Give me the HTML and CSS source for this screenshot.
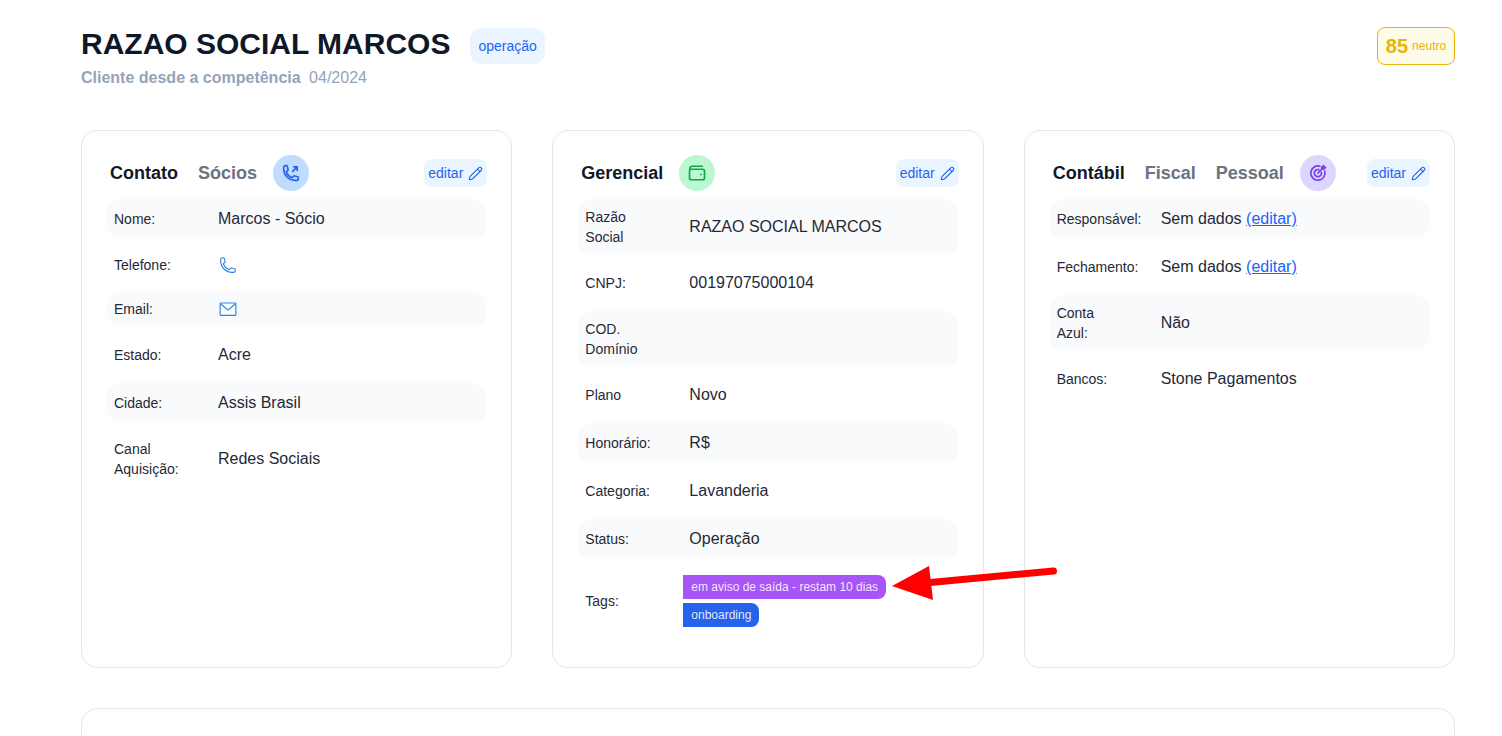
FILE: index.html
```html
<!DOCTYPE html>
<html lang="pt-BR">
<head>
    <meta charset="UTF-8">
    <meta name="viewport" content="width=device-width, initial-scale=1.0">
    <title>RAZAO SOCIAL MARCOS</title>
    <link rel="stylesheet" href="styles.css">
</head>
<body>
    <div class="page">
        <header class="client-header">
            <div>
                <div class="client-title">
                    <h1>RAZAO SOCIAL MARCOS</h1>
                    <span class="status-pill">operação</span>
                </div>
                <p class="client-since"><strong>Cliente desde a competência</strong> <span>04/2024</span></p>
            </div>
            <div class="score"><b>85</b> <span>neutro</span></div>
        </header>

        <section class="cards">
            <div class="card">
                <div class="card-head">
                    <span class="tab active">Contato</span>
                    <span class="tab">Sócios</span>
                    <span class="circle circle-blue">
                        <svg class="circle-icon" viewBox="0 0 24 24"><path d="M20.250 3.750v4.500m0-4.500h-4.500m4.500 0-6 6m3 12c-8.284 0-15-6.716-15-15V4.500A2.250 2.250 0 0 1 4.500 2.250h1.372c.516 0 .966.351 1.091.852l1.106 4.423c.11.44-.054.902-.417 1.173l-1.293.97a1.062 1.062 0 0 0-.38 1.21 12.035 12.035 0 0 0 7.143 7.143c.441.162.928-.004 1.21-.38l.97-1.293a1.125 1.125 0 0 1 1.173-.417l4.423 1.106c.5.125.852.575.852 1.091V19.500a2.250 2.250 0 0 1-2.250 2.250h-2.250Z"/></svg>
                    </span>
                    <button class="edit-button">editar
                        <svg class="pencil" viewBox="0 0 24 24"><path d="M21.174 6.812a1 1 0 0 0-3.986-3.987L3.842 16.174a2 2 0 0 0-.5.83l-1.321 4.352a.5.5 0 0 0 .623.622l4.353-1.32a2 2 0 0 0 .83-.497z"/><path d="m15 5 4 4"/></svg>
                    </button>
                </div>
                <div class="rows">
                    <div class="row"><span class="label">Nome:</span><span class="value">Marcos - Sócio</span></div>
                    <div class="row row-icon"><span class="label">Telefone:</span>
                        <svg class="contact-icon" viewBox="0 0 24 24"><path d="M2.250 6.750c0 8.284 6.716 15 15 15h2.250a2.250 2.250 0 0 0 2.250-2.250v-1.372c0-.516-.351-.966-.852-1.091l-4.423-1.106c-.44-.11-.902.055-1.173.417l-.97 1.293c-.282.376-.769.542-1.21.38a12.035 12.035 0 0 1-7.143-7.143c-.162-.441.004-.928.38-1.21l1.293-.97c.363-.271.527-.734.417-1.173L6.963 3.102a1.125 1.125 0 0 0-1.091-.852H4.500A2.250 2.250 0 0 0 2.250 4.500v2.250Z"/></svg>
                    </div>
                    <div class="row row-icon"><span class="label">Email:</span>
                        <svg class="contact-icon" viewBox="0 0 24 24"><rect x="1.500" y="4" width="21" height="16.500" rx="1"/><path d="m2 5 10 8.500L22 5"/></svg>
                    </div>
                    <div class="row"><span class="label">Estado:</span><span class="value">Acre</span></div>
                    <div class="row"><span class="label">Cidade:</span><span class="value">Assis Brasil</span></div>
                    <div class="row"><span class="label">Canal<br>Aquisição:</span><span class="value">Redes Sociais</span></div>
                </div>
            </div>

            <div class="card">
                <div class="card-head">
                    <span class="tab active">Gerencial</span>
                    <span class="circle circle-green">
                        <svg class="circle-icon" viewBox="0 0 24 24"><path d="M19 3H5.500A3 3 0 0 0 2.500 6"/><rect x="2" y="7" width="20" height="14" rx="2.500"/><path d="M17 14h.5"/></svg>
                    </span>
                    <button class="edit-button">editar
                        <svg class="pencil" viewBox="0 0 24 24"><path d="M21.174 6.812a1 1 0 0 0-3.986-3.987L3.842 16.174a2 2 0 0 0-.5.83l-1.321 4.352a.5.5 0 0 0 .623.622l4.353-1.32a2 2 0 0 0 .83-.497z"/><path d="m15 5 4 4"/></svg>
                    </button>
                </div>
                <div class="rows">
                    <div class="row"><span class="label">Razão<br>Social</span><span class="value">RAZAO SOCIAL MARCOS</span></div>
                    <div class="row"><span class="label">CNPJ:</span><span class="value">00197075000104</span></div>
                    <div class="row"><span class="label">COD.<br>Domínio</span><span class="value"></span></div>
                    <div class="row"><span class="label">Plano</span><span class="value">Novo</span></div>
                    <div class="row"><span class="label">Honorário:</span><span class="value">R$</span></div>
                    <div class="row"><span class="label">Categoria:</span><span class="value">Lavanderia</span></div>
                    <div class="row"><span class="label">Status:</span><span class="value">Operação</span></div>
                    <div class="row"><span class="label">Tags:</span>
                        <div class="tags">
                            <span class="tag tag-purple">em aviso de saída - restam 10 dias</span>
                            <span class="tag tag-blue">onboarding</span>
                        </div>
                    </div>
                </div>
            </div>

            <div class="card">
                <div class="card-head">
                    <span class="tab active">Contábil</span>
                    <span class="tab">Fiscal</span>
                    <span class="tab">Pessoal</span>
                    <span class="circle circle-purple">
                        <svg class="circle-icon" viewBox="0 0 24 24"><path d="M21 9.500A9.500 9.500 0 1 1 14.500 3"/><path d="M16.500 11a4.800 4.800 0 1 1-3.500-3.500"/><path d="M12 12 20 4"/><path d="M17 4.500V7h2.500L22 4.500h-2.500V2z"/></svg>
                    </span>
                    <button class="edit-button">editar
                        <svg class="pencil" viewBox="0 0 24 24"><path d="M21.174 6.812a1 1 0 0 0-3.986-3.987L3.842 16.174a2 2 0 0 0-.5.83l-1.321 4.352a.5.5 0 0 0 .623.622l4.353-1.32a2 2 0 0 0 .83-.497z"/><path d="m15 5 4 4"/></svg>
                    </button>
                </div>
                <div class="rows">
                    <div class="row"><span class="label">Responsável:</span><span class="value">Sem dados <a href="#">(editar)</a></span></div>
                    <div class="row"><span class="label">Fechamento:</span><span class="value">Sem dados <a href="#">(editar)</a></span></div>
                    <div class="row"><span class="label">Conta<br>Azul:</span><span class="value">Não</span></div>
                    <div class="row"><span class="label">Bancos:</span><span class="value">Stone Pagamentos</span></div>
                </div>
            </div>
        </section>

        <section class="card card-next"></section>
    </div>

    <!-- seta de anotacao por cima da tag -->
    <svg class="annotation" viewBox="0 0 180 50" width="180" height="50">
        <path class="annotation-line" d="M173.500 15 45 27"/>
        <path class="annotation-head" d="M12 30 49 10 53 44z"/>
    </svg>
</body>
</html>
```

FILE: styles.css
```css
html, body {
    height: 100%;
    overflow: hidden;
}
body {
    font-family: "Liberation Sans", Arial, sans-serif;
    margin: 0;
    background-color: #fff;
    color: #111827;
    position: relative;
}
.page {
    padding: 26px 47px 0 81px;
}
.client-header {
    display: flex;
    justify-content: space-between;
    align-items: flex-start;
    height: 104px;
}
.client-title {
    display: flex;
    align-items: flex-start;
    gap: 20px;
}
.client-title h1 {
    margin: 0;
    font-size: 30px;
    line-height: 36px;
    font-weight: 700;
    color: #0f172a;
}
.status-pill {
    margin-top: 2px;
    padding: 0 8px;
    line-height: 36px;
    font-size: 14px;
    color: #1c64f2;
    background-color: #ebf5ff;
    border-radius: 12px;
}
.client-since {
    margin: 2px 0 0;
    font-size: 16px;
    line-height: 24px;
    color: #94a3b8;
}
.client-since span {
    margin-left: 4px;
}
.score {
    box-sizing: border-box;
    height: 38px;
    margin-top: 1px;
    width: 78px;
    display: flex;
    align-items: center;
    justify-content: center;
    gap: 4px;
    color: #eab308;
    background-color: #fefce8;
    border: 1px solid #eab308;
    border-radius: 8px;
    font-size: 12px;
}
.score b {
    font-size: 20px;
}
.cards {
    display: grid;
    grid-template-columns: repeat(3, 1fr);
    gap: 40px;
}
.card {
    box-sizing: border-box;
    height: 538px;
    padding: 24px;
    background: white;
    border: 1px solid #e2e8f0;
    border-radius: 16px;
}
.card-next {
    margin-top: 40px;
    height: 300px;
}
.card-head {
    display: flex;
    align-items: center;
    height: 36px;
    padding-left: 4px;
    gap: 20px;
    margin-bottom: 8px;
}
.tab {
    font-size: 18px;
    font-weight: 700;
    color: #6b7280;
}
.tab.active {
    color: #111827;
}
.circle {
    width: 36px;
    height: 36px;
    flex: none;
    display: flex;
    align-items: center;
    justify-content: center;
    border-radius: 50%;
    margin-left: -4px;
}
.circle-icon {
    width: 18px;
    height: 18px;
    fill: none;
    stroke: currentColor;
    stroke-width: 2.25;
    stroke-linecap: round;
    stroke-linejoin: round;
}
.circle-blue {
    background-color: #bfdbfe;
    color: #2563eb;
}
.circle-green {
    background-color: #bbf7d0;
    color: #16a34a;
}
.circle-purple {
    background-color: #ddd6fe;
    color: #7c3aed;
}
.edit-button {
    margin-left: auto;
    height: 28px;
    padding: 0 4px;
    display: flex;
    align-items: center;
    gap: 5px;
    font-family: inherit;
    font-size: 14px;
    color: #1c64f2;
    background-color: #ebf5ff;
    border: none;
    border-radius: 8px;
    cursor: pointer;
}
.pencil {
    width: 15px;
    height: 15px;
    fill: none;
    stroke: currentColor;
    stroke-width: 1.75;
    stroke-linecap: round;
    stroke-linejoin: round;
}
.rows {
    display: flex;
    flex-direction: column;
    gap: 8px;
}
.row {
    display: flex;
    align-items: center;
    padding: 8px;
    border-radius: 16px;
}
.row:nth-child(odd) {
    background-color: #f9fafb;
}
.row:last-child:nth-child(odd) {
    background-color: transparent;
}
.label {
    flex: 0 0 104px;
    font-size: 14px;
    line-height: 20px;
    color: #1f2937;
}
.value {
    font-size: 16px;
    line-height: 24px;
    color: #1f2937;
}
.value a {
    color: #1c64f2;
}
.contact-icon {
    width: 18px;
    height: 18px;
    margin-left: 1px;
    fill: none;
    stroke: #2b85e4;
    stroke-width: 1.5;
    stroke-linecap: round;
    stroke-linejoin: round;
}
.tags {
    display: flex;
    flex-direction: column;
    align-items: flex-start;
    gap: 4px;
    margin-left: -6px;
    padding: 0;
}
.tag {
    padding: 0 8px;
    font-size: 12px;
    line-height: 24px;
    color: rgba(255, 255, 255, 0.88);
    border-radius: 0 8px 8px 0;
}
.tag-purple {
    background-color: #a855f7;
}
.tag-blue {
    background-color: #2563eb;
}
.annotation {
    position: absolute;
    left: 880px;
    top: 556px;
}
.annotation-line {
    fill: none;
    stroke: #ff0000;
    stroke-width: 7;
    stroke-linecap: round;
}
.annotation-head {
    fill: #ff0000;
}
```
